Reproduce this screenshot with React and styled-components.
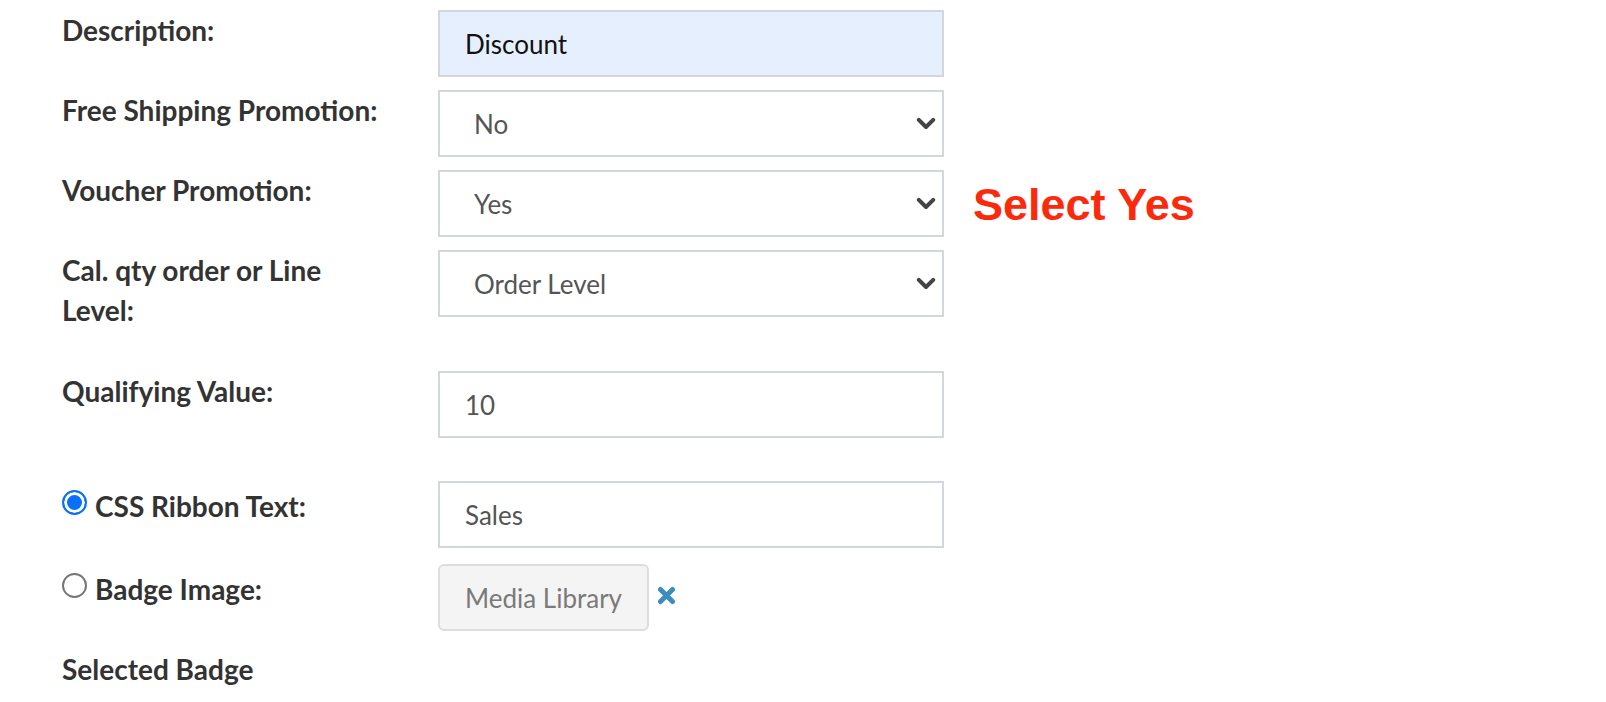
import { createGlobalStyle, styled } from "styled-components"

const GlobalStyle = createGlobalStyle`
    html, body {
        margin: 0;
        padding: 0;
        background: #ffffff;
    }
    body {
        font-family: Lato, "Liberation Sans", sans-serif;
        color: #333333;
    }
`

const Container = styled.div`
    padding: 10px 0 0 62px;
`
const Row = styled.div`
    display: flex;
    align-items: flex-start;
    margin-top: ${(p) => p.$gap || 0}px;
`
const Label = styled.label`
    display: flex;
    align-items: flex-start;
    box-sizing: border-box;
    flex: none;
    width: 376px;
    padding-right: 50px;
    padding-top: ${(p) => p.$offset || 0}px;
    font-size: 28px;
    line-height: 40px;
    font-weight: 700;
    color: #333333;
`
const Radio = styled.input.attrs({ type: "radio" })`
    appearance: none;
    flex: none;
    width: 25px;
    height: 25px;
    margin: 0 8px 0 0;
    border-radius: 50%;
    border: 2px solid #767676;
    background: #ffffff;
    box-sizing: border-box;
    position: relative;
    top: 4px;
    &:checked {
        border: 2.5px solid #0b6ff7;
        box-shadow: inset 0 0 0 3px #ffffff;
        background: #0b6ff7;
    }
`
const Field = styled.div`
    display: flex;
    align-items: center;
    gap: 8px;
    flex: none;
    width: 506px;
`
const Input = styled.input`
    box-sizing: border-box;
    width: 506px;
    height: 67px;
    padding: 0 25px;
    border: 2px solid #d2d6de;
    border-radius: 0;
    background: ${(p) => (p.$filled ? "#e6effd" : "#ffffff")};
    font-family: Lato, "Liberation Sans", sans-serif;
    font-size: 26px;
    color: ${(p) => (p.$filled ? "#111111" : "#555555")};
    outline: none;
`
const SelectBox = styled.div`
    position: relative;
    width: 506px;
    height: 67px;
`
const Select = styled.select`
    appearance: none;
    box-sizing: border-box;
    width: 100%;
    height: 100%;
    padding: 0 50px 0 34px;
    border: 2px solid #d2d6de;
    border-radius: 0;
    background: #ffffff;
    font-family: Lato, "Liberation Sans", sans-serif;
    font-size: 26px;
    color: #555555;
    outline: none;
`
const Chevron = styled.svg`
    position: absolute;
    right: 8px;
    top: 27px;
    width: 20px;
    height: 13px;
    pointer-events: none;
`
const MediaButton = styled.button`
    box-sizing: border-box;
    flex: none;
    width: 211px;
    height: 67px;
    border: 2px solid #dddddd;
    border-radius: 6px;
    background: #f4f4f4;
    font-family: Lato, "Liberation Sans", sans-serif;
    font-size: 26px;
    color: #7a7a7a;
    padding: 0;
`
const RemoveIcon = styled.svg`
    flex: none;
    width: 19px;
    height: 19px;
    margin-top: -4px;
`
const Note = styled.div`
    margin: 10px 0 0 29px;
    font-family: "Liberation Sans", Arial, sans-serif;
    font-size: 45px;
    font-weight: 700;
    color: #fc2a0d;
    line-height: 50px;
    white-space: nowrap;
`

const Dropdown = ({ value, options }) => (
    <SelectBox>
        <Select defaultValue={value}>
            {options.map((o) => (
                <option key={o}>{o}</option>
            ))}
        </Select>
        <Chevron viewBox="0 0 20 13">
            <polyline points="2.8,2.8 10,10 17.2,2.8" fill="none" stroke="#444444" strokeWidth="4" strokeLinecap="round" strokeLinejoin="round" />
        </Chevron>
    </SelectBox>
)

const App = () => {
    return (
        <Container>
            <GlobalStyle />
            <Row>
                <Label>Description:</Label>
                <Field>
                    <Input $filled defaultValue="Discount" />
                </Field>
            </Row>
            <Row $gap={13}>
                <Label>Free Shipping Promotion:</Label>
                <Field>
                    <Dropdown value="No" options={["No", "Yes"]} />
                </Field>
            </Row>
            <Row $gap={13}>
                <Label>Voucher Promotion:</Label>
                <Field>
                    <Dropdown value="Yes" options={["No", "Yes"]} />
                </Field>
                <Note>Select Yes</Note>
            </Row>
            <Row $gap={13}>
                <Label>Cal. qty order or Line Level:</Label>
                <Field>
                    <Dropdown value="Order Level" options={["Order Level", "Line Level"]} />
                </Field>
            </Row>
            <Row $gap={41}>
                <Label>Qualifying Value:</Label>
                <Field>
                    <Input defaultValue="10" />
                </Field>
            </Row>
            <Row $gap={43}>
                <Label $offset={5}>
                    <Radio name="badge" defaultChecked />
                    CSS Ribbon Text:
                </Label>
                <Field>
                    <Input defaultValue="Sales" />
                </Field>
            </Row>
            <Row $gap={16}>
                <Label $offset={5}>
                    <Radio name="badge" />
                    Badge Image:
                </Label>
                <Field>
                    <MediaButton>Media Library</MediaButton>
                    <RemoveIcon viewBox="0 0 19 19">
                        <path d="M3.5 3.5 L15.5 15.5 M15.5 3.5 L3.5 15.5" stroke="#3c8dbc" strokeWidth="5" strokeLinecap="round" />
                    </RemoveIcon>
                </Field>
            </Row>
            <Row $gap={18}>
                <Label>Selected Badge</Label>
            </Row>
        </Container>
    )
}

export default App
